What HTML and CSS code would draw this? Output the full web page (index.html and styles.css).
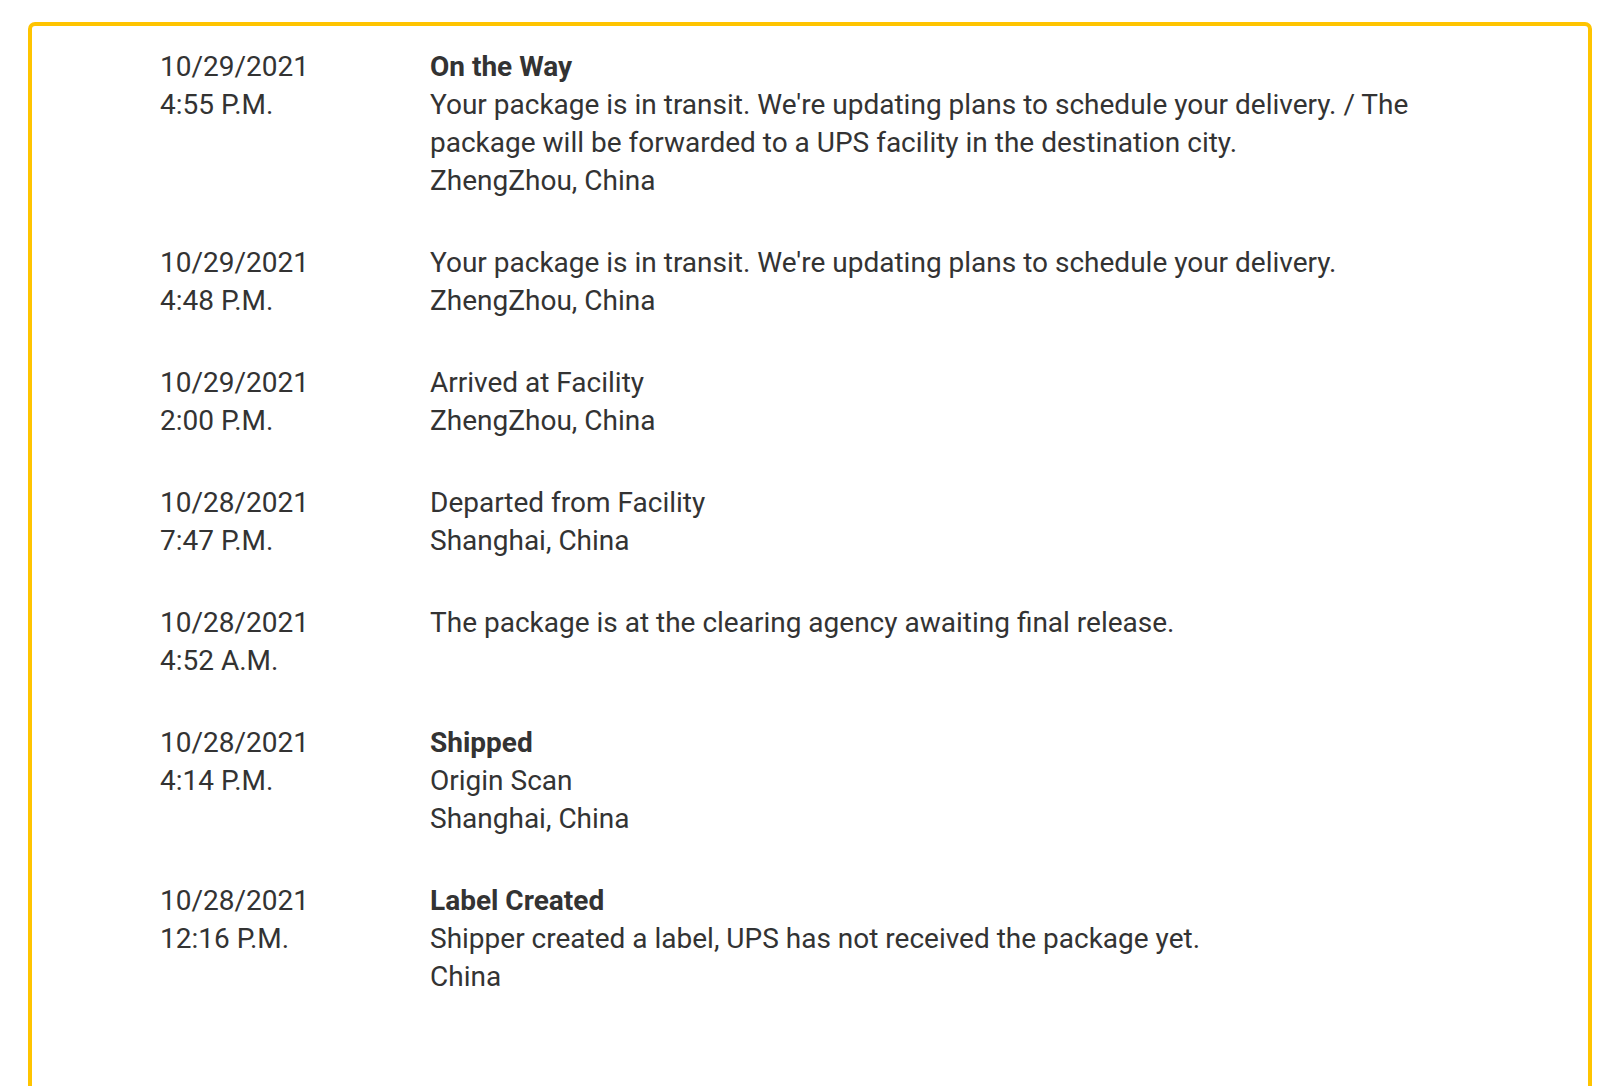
FILE: index.html
```html
<!DOCTYPE html>
<html lang="en">
<head>
<meta charset="utf-8">
<title>Shipment Progress</title>
<link rel="stylesheet" href="styles.css">
</head>
<body>
<div class="card">
  <ul class="events">
    <li class="event">
      <div class="when"><div>10/29/2021</div><div>4:55 P.M.</div></div>
      <div class="what">
        <div class="status">On the Way</div>
        <div>Your package is in transit. We're updating plans to schedule your delivery. / The package will be forwarded to a UPS facility in the destination city.</div>
        <div>ZhengZhou, China</div>
      </div>
    </li>
    <li class="event">
      <div class="when"><div>10/29/2021</div><div>4:48 P.M.</div></div>
      <div class="what">
        <div>Your package is in transit. We're updating plans to schedule your delivery.</div>
        <div>ZhengZhou, China</div>
      </div>
    </li>
    <li class="event">
      <div class="when"><div>10/29/2021</div><div>2:00 P.M.</div></div>
      <div class="what">
        <div>Arrived at Facility</div>
        <div>ZhengZhou, China</div>
      </div>
    </li>
    <li class="event">
      <div class="when"><div>10/28/2021</div><div>7:47 P.M.</div></div>
      <div class="what">
        <div>Departed from Facility</div>
        <div>Shanghai, China</div>
      </div>
    </li>
    <li class="event">
      <div class="when"><div>10/28/2021</div><div>4:52 A.M.</div></div>
      <div class="what">
        <div>The package is at the clearing agency awaiting final release.</div>
      </div>
    </li>
    <li class="event">
      <div class="when"><div>10/28/2021</div><div>4:14 P.M.</div></div>
      <div class="what">
        <div class="status">Shipped</div>
        <div>Origin Scan</div>
        <div>Shanghai, China</div>
      </div>
    </li>
    <li class="event">
      <div class="when"><div>10/28/2021</div><div>12:16 P.M.</div></div>
      <div class="what">
        <div class="status">Label Created</div>
        <div>Shipper created a label, UPS has not received the package yet.</div>
        <div>China</div>
      </div>
    </li>
  </ul>
</div>
</body>
</html>
```

FILE: styles.css
```css
html, body {
  margin: 0;
  padding: 0;
  background: #ffffff;
}

body {
  font-family: Roboto, "Liberation Sans", Arial, sans-serif;
  font-size: 28px;
  line-height: 38px;
  color: #333333;
  padding: 22px 24px 0 28px;
}

.card {
  border: 4px solid #ffc400;
  border-radius: 7px;
  min-height: 1100px;
  box-sizing: border-box;
  padding: 22px 100px 40px 128px;
}

.events {
  list-style: none;
  margin: 0;
  padding: 0;
}

.event {
  display: grid;
  grid-template-columns: 270px 1fr;
  padding-bottom: 44px;
}

.status {
  font-weight: 700;
}
```
